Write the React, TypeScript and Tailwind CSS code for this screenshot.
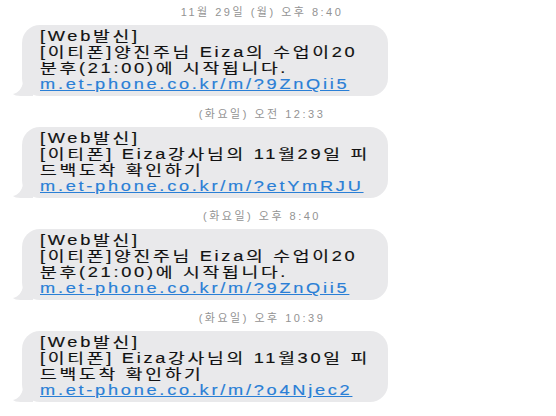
const messages = [
  {
    time: "11월 29일 (월) 오후 8:40",
    lines: ["[Web발신]", "[이티폰]양진주님 Eiza의 수업이20", "분후(21:00)에 시작됩니다."],
    link: "m.et-phone.co.kr/m/?9ZnQii5",
  },
  {
    time: "(화요일) 오전 12:33",
    lines: ["[Web발신]", "[이티폰] Eiza강사님의 11월29일 피", "드백도착 확인하기"],
    link: "m.et-phone.co.kr/m/?etYmRJU",
  },
  {
    time: "(화요일) 오후 8:40",
    lines: ["[Web발신]", "[이티폰]양진주님 Eiza의 수업이20", "분후(21:00)에 시작됩니다."],
    link: "m.et-phone.co.kr/m/?9ZnQii5",
  },
  {
    time: "(화요일) 오후 10:39",
    lines: ["[Web발신]", "[이티폰] Eiza강사님의 11월30일 피", "드백도착 확인하기"],
    link: "m.et-phone.co.kr/m/?o4Njec2",
  },
];

function Bubble({ lines, link }: { lines: string[]; link: string }) {
  return (
    <div className="relative w-[366px] rounded-[18px] bg-[#e9e9eb] pl-[18px] pr-2 pt-[3px] pb-[4px]">
      <svg
        className="absolute bottom-0 left-[-9px]"
        width="20"
        height="18"
        viewBox="0 0 20 18"
      >
        <path d="M20 0 L20 18 L8 18 C4 18 1 17 0 16 C5 15 9 11 10 4 Z" fill="#e9e9eb" />
      </svg>
      {/* the shot is stretched sideways, so the text is too */}
      <div className="relative origin-left scale-x-[1.3] whitespace-nowrap text-[14px] leading-[16px] tracking-[2.1px] text-[#111] [-webkit-text-stroke:0.15px_currentColor]">
        {lines.map((l, i) => (
          <p key={i}>{l}</p>
        ))}
        <p className="text-[#2a7fd6] underline">{link}</p>
      </div>
    </div>
  );
}

export default function App() {
  return (
    <div
      className="h-[416px] w-[556px] overflow-hidden bg-white pl-[22px]"
      style={{ fontFamily: '"Liberation Sans", "Noto Sans CJK KR", sans-serif' }}
    >
      {messages.map((m, i) => (
        <div key={i} className={i === 0 ? "pt-[5px]" : "pt-[11px]"}>
          <p className="w-[478px] pl-[2px] text-center text-[11px] leading-[14px] tracking-[2.5px] text-[#939393]">
            {m.time}
          </p>
          <div className="mt-[6px]">
            <Bubble lines={m.lines} link={m.link} />
          </div>
        </div>
      ))}
    </div>
  );
}
